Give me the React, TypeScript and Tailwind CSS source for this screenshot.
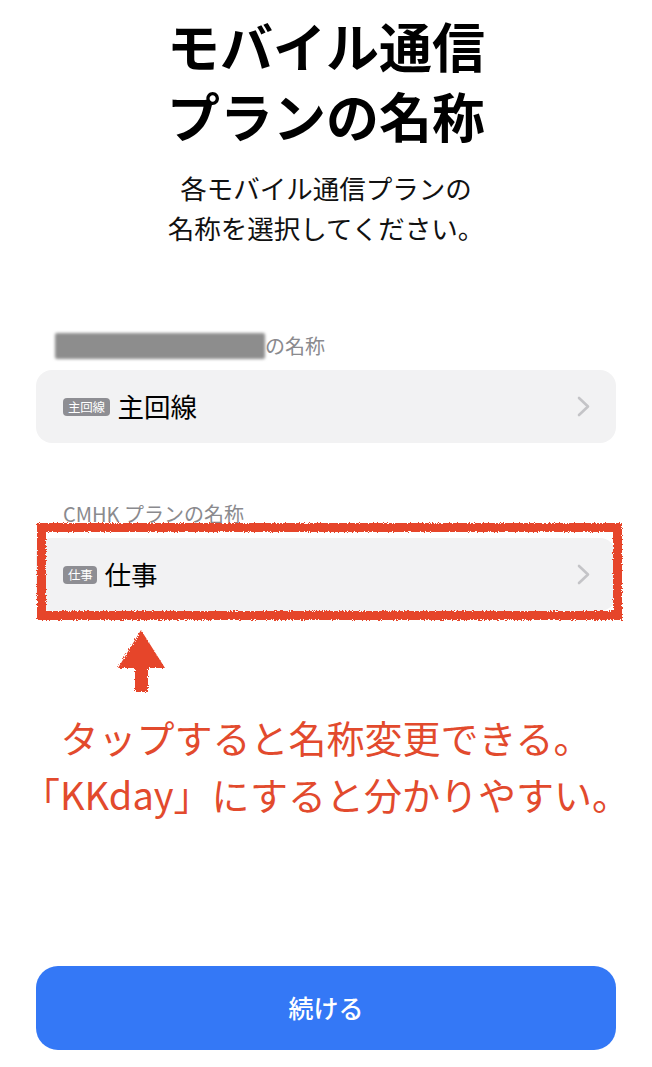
import React from 'react';

function Chevron() {
  return (
    <svg width="13" height="21" viewBox="0 0 13 21" fill="none">
      <path d="M2 2 L11 10.5 L2 19" stroke="#c4c4c7" strokeWidth="2.6" strokeLinecap="round" strokeLinejoin="round" />
    </svg>
  );
}

function PlanRow({ badge, name, gap }: { badge: string; name: string; gap: string }) {
  return (
    <div className="h-[73px] rounded-[16px] bg-[#f2f2f3] flex items-center pl-[27px] pr-[26px]">
      <span className="h-[18px] px-[5px] rounded-[4px] bg-[#8e8e93] text-white text-[12.5px] leading-[18px] tracking-tight">
        {badge}
      </span>
      <span className={`${gap} text-[26.5px] leading-none text-black`}>{name}</span>
      <span className="ml-auto flex items-center">
        <Chevron />
      </span>
    </div>
  );
}

export default function App() {
  return (
    <div className="min-h-screen flex flex-col bg-white px-9 pt-[10px] pb-[17px] font-['Noto_Sans_CJK_JP',sans-serif]">
      {/* hand-drawn look for the red annotation marks */}
      <svg width="0" height="0" className="absolute">
        <filter id="rough">
          <feTurbulence type="fractalNoise" baseFrequency="0.8" numOctaves="2" seed="3" />
          <feDisplacementMap in="SourceGraphic" scale="4" />
        </filter>
      </svg>

      <h1 className="text-center text-[53px] leading-[70px] font-bold text-black">
        モバイル通信
        <br />
        プランの名称
      </h1>

      <p className="mt-[18px] text-center text-[26.5px] leading-[40px] text-[#111]">
        各モバイル通信プランの
        <br />
        名称を選択してください。
      </p>

      <div className="mt-[86px] pl-[19px] flex items-center h-[24px] text-[20px] text-[#8a8a8e]">
        <span className="w-[210px] h-[26px] bg-[#8d8d8d] blur-[1.5px] rounded-[2px]" />
        <span>の名称</span>
      </div>

      <div className="mt-[12px]">
        <PlanRow badge="主回線" name="主回線" gap="ml-[8px]" />
      </div>

      <div className="mt-[59px] pl-[27px] h-[24px] flex items-center text-[20px] text-[#8a8a8e]">
        CMHK プランの名称
      </div>

      <div className="mt-[12px] relative">
        <PlanRow badge="仕事" name="仕事" gap="ml-[7px]" />
        <div className="absolute -top-[15px] -bottom-[9px] left-[1px] -right-[6px] border-[9px] border-[#e6452a] [filter:url(#rough)]" />
      </div>

      <div className="mt-[17px] ml-[81px]">
        <svg width="50" height="64" viewBox="0 0 50 64" className="[filter:url(#rough)]">
          <polygon points="24,2 48,40 31,40 31,64 18,64 18,40 1,40" fill="#e6452a" />
        </svg>
      </div>

      <p className="mt-[16px] -mx-6 text-center text-[38px] leading-[57px] text-[#e24a2d]">
        タップすると名称変更できる。
        <br />
        「KKday」にすると分かりやすい。
      </p>

      <button className="mt-auto h-[84px] rounded-[22px] bg-[#3478f6] text-white text-[25px] font-medium">
        続ける
      </button>
    </div>
  );
}
